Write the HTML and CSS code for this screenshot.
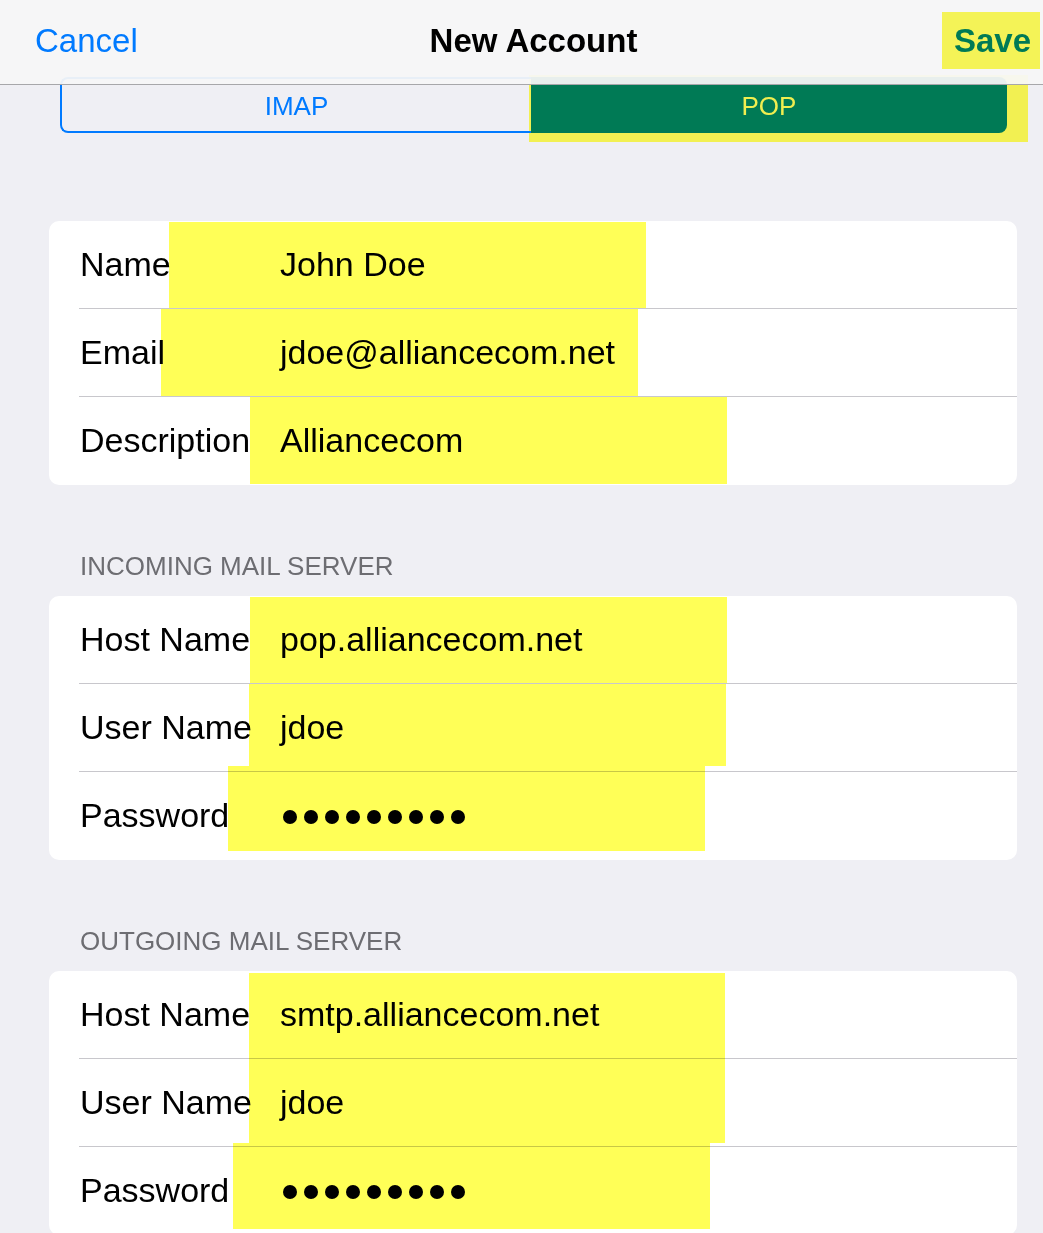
FILE: index.html
```html
<!DOCTYPE html>
<html lang="en">
<head>
<meta charset="utf-8">
<title>New Account</title>
<link rel="stylesheet" href="styles.css">
</head>
<body>
<header class="nav">
  <span class="nav-cancel">Cancel</span>
  <span class="nav-title">New Account</span>
  <span class="nav-save">Save</span>
</header>

<div class="segment">
  <div class="seg seg-imap">IMAP</div>
  <div class="seg seg-pop">POP</div>
</div>

<main class="form">
  <section class="card">
    <div class="row"><span class="label">Name</span><span class="value">John Doe</span><span class="hl hl-name"></span></div>
    <div class="row"><span class="label">Email</span><span class="value">jdoe@alliancecom.net</span><span class="hl hl-email"></span></div>
    <div class="row"><span class="label">Description</span><span class="value">Alliancecom</span><span class="hl hl-desc"></span></div>
  </section>

  <h2 class="section-title">INCOMING MAIL SERVER</h2>
  <section class="card">
    <div class="row"><span class="label">Host Name</span><span class="value">pop.alliancecom.net</span><span class="hl hl-in-host"></span></div>
    <div class="row"><span class="label">User Name</span><span class="value">jdoe</span><span class="hl hl-in-user"></span></div>
    <div class="row"><span class="label">Password</span><span class="value dots" aria-label="password"><i class="dot"></i><i class="dot"></i><i class="dot"></i><i class="dot"></i><i class="dot"></i><i class="dot"></i><i class="dot"></i><i class="dot"></i><i class="dot"></i></span><span class="hl hl-in-pass"></span></div>
  </section>

  <h2 class="section-title">OUTGOING MAIL SERVER</h2>
  <section class="card">
    <div class="row"><span class="label">Host Name</span><span class="value">smtp.alliancecom.net</span><span class="hl hl-out-host"></span></div>
    <div class="row"><span class="label">User Name</span><span class="value">jdoe</span><span class="hl hl-out-user"></span></div>
    <div class="row"><span class="label">Password</span><span class="value dots" aria-label="password"><i class="dot"></i><i class="dot"></i><i class="dot"></i><i class="dot"></i><i class="dot"></i><i class="dot"></i><i class="dot"></i><i class="dot"></i><i class="dot"></i></span><span class="hl hl-out-pass"></span></div>
  </section>
</main>
</body>
</html>
```
FILE: styles.css
```css
html, body {
  margin: 0;
  padding: 0;
}
body {
  background: #efeff4;
  font-family: "Liberation Sans", Arial, sans-serif;
  width: 1043px;
  height: 1233px;
  overflow: hidden;
}

/* Navigation bar */
.nav {
  position: relative;
  z-index: 2;
  box-sizing: border-box;
  height: 85px;
  border-bottom: 1px solid #a7a7aa;
  background: rgba(247, 247, 247, 0.94);
  display: grid;
  grid-template-columns: 1fr auto 1fr;
  align-items: center;
  padding: 0 3px 3px 35px;
  font-size: 33px;
}
.nav-cancel {
  color: #007aff;
  justify-self: start;
}
.nav-title {
  color: #000;
  font-weight: bold;
  margin-right: 8px;
}
.nav-save {
  justify-self: end;
  color: #007a55;
  font-weight: bold;
  background: #f4f357;
  height: 57px;
  line-height: 57px;
  padding: 0 9px 0 12px;
}

/* Segmented control */
.segment {
  display: flex;
  height: 56px;
  margin: -8px 0 0 60px;
}
.seg {
  box-sizing: border-box;
  display: flex;
  align-items: center;
  justify-content: center;
  font-size: 26px;
  padding-top: 2px;
}
.seg-imap {
  width: 471px;
  border: 2px solid #007aff;
  border-right: none;
  border-radius: 8px 0 0 8px;
  color: #007aff;
}
.seg-pop {
  width: 476px;
  background: #007a55;
  color: #f0ee50;
  border-radius: 0 8px 8px 0;
  position: relative;
}
.seg-pop::before {
  content: "";
  position: absolute;
  left: -2px;
  top: -2px;
  right: -21px;
  bottom: -9px;
  background: #f2f052;
  z-index: -1;
}

/* Form */
.form {
  padding: 88px 26px 0 49px;
}
.card {
  background: #fff;
  border-radius: 10px;
}
.row {
  position: relative;
  height: 88px;
  display: flex;
  align-items: center;
  padding-left: 31px;
  font-size: 34px;
  color: #000;
  padding-bottom: 2px;
  box-sizing: border-box;
}
.row + .row::before {
  content: "";
  position: absolute;
  top: -1px;
  left: 30px;
  right: 0;
  height: 1px;
  background: #c8c7cc;
}
.label {
  width: 200px;
  flex: none;
  white-space: nowrap;
}
.value {
  white-space: nowrap;
}
.dots {
  display: flex;
  gap: 7px;
  margin-left: 3px;
  padding-top: 4px;
}
.dot {
  display: block;
  width: 14px;
  height: 14px;
  border-radius: 50%;
  background: #000;
}

.section-title {
  margin: 66px 0 15px 31px;
  font-size: 26px;
  font-weight: normal;
  line-height: 30px;
  color: #6d6d72;
}

/* Yellow highlighter marks */
.hl {
  position: absolute;
  width: 477px;
  background: #ffff57;
  mix-blend-mode: multiply;
}
.hl-name { left: 120px; top: 1px; height: 86px; }
.hl-email { left: 112px; top: 0; height: 87px; }
.hl-desc { left: 201px; top: 0; height: 87px; }
.hl-in-host { left: 201px; top: 1px; height: 86px; }
.hl-in-user { left: 200px; top: 0; height: 82px; }
.hl-in-pass { left: 179px; top: -6px; height: 85px; }
.hl-out-host { left: 200px; top: 2px; height: 84px; width: 476px; }
.hl-out-user { left: 200px; top: -2px; height: 86px; width: 476px; }
.hl-out-pass { left: 184px; top: -4px; height: 86px; }
```
